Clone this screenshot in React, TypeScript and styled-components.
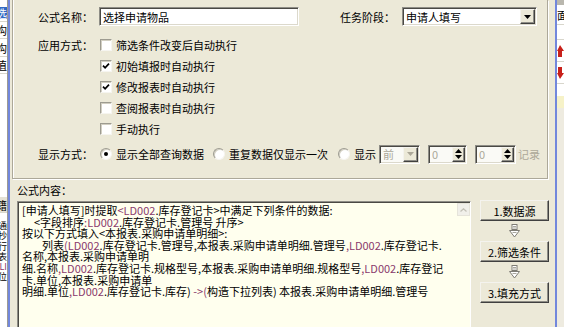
import React from 'react';
import styled, { createGlobalStyle } from 'styled-components';

const GlobalStyle = createGlobalStyle`
  html, body {
    margin: 0;
    padding: 0;
    overflow: hidden;
    background: #ECE9D8;
  }
  body {
    font-family: "Noto Sans CJK SC", "Liberation Sans", sans-serif;
    font-size: 11px;
    color: #000;
  }
`;

const Screen = styled.div`
  display: flex;
  width: 564px;
  height: 327px;
  overflow: hidden;
`;

/* windows lying behind the dialog, only a sliver of each is visible */
const BackLeft = styled.div`
  flex: none;
  width: 8px;
  box-sizing: border-box;
  border-right: 1px solid #9C9A92;
  background: #fff;
  display: flex;
  flex-direction: column;
  overflow: hidden;
`;

const BackRight = styled.div`
  flex: none;
  width: 7px;
  display: flex;
  flex-direction: column;
  overflow: hidden;
  background: #EEEBE0;
`;

const GridCell = styled.div<{ $h: number; $align?: 'start' | 'end'; $head?: boolean }>`
  flex: none;
  height: ${({ $h }) => $h}px;
  box-sizing: border-box;
  border-bottom: 1px solid #D8D6CC;
  background: ${({ $head }) => ($head ? '#E4E1D4' : '#fff')};
  display: flex;
  align-items: center;
  justify-content: ${({ $align }) => ($align === 'start' ? 'flex-start' : 'flex-end')};
  white-space: nowrap;
  line-height: 12px;
`;

const Picked = styled.span`
  background: #316AC5;
  color: #fff;
  padding: 0 0 0 2px;
`;

const Blank = styled.div<{ $h: number; $bg?: string }>`
  flex: none;
  height: ${({ $h }) => $h}px;
  background: ${({ $bg }) => $bg || '#fff'};
`;

const CutLines = styled.div`
  flex: none;
  display: flex;
  flex-direction: column;
  align-items: flex-end;
  padding-top: 8px;
  font-size: 9px;
  line-height: 10.3px;
  white-space: nowrap;
`;

const Dialog = styled.div`
  flex: none;
  width: 549px;
  height: 327px;
  box-sizing: border-box;
  border-left: 2px solid #7287DC;
  border-right: 2px solid #7287DC;
  background: #ECE9D8;
  display: flex;
  flex-direction: column;
`;

const GroupBox = styled.div`
  flex: none;
  height: 179px;
  margin: 0 7px 0 2px;
  box-sizing: border-box;
  border: 1px solid #ACA899;
  border-top: none;
  box-shadow: 1px 1px 0 #fff, inset 1px 0 0 #fff;
  padding: 7px 0 0 25px;
  display: flex;
  flex-direction: column;
`;

const FieldRow = styled.div<{ $mt?: number; $h: number }>`
  display: flex;
  align-items: center;
  height: ${({ $h }) => $h}px;
  margin-top: ${({ $mt }) => $mt || 0}px;
`;

const Label = styled.div<{ $w?: number; $ml?: number }>`
  flex: none;
  width: ${({ $w }) => ($w ? `${$w}px` : 'auto')};
  margin-left: ${({ $ml }) => $ml || 0}px;
  white-space: nowrap;
`;

const Sunken = styled.div<{ $w: number; $h?: number; $off?: boolean; $ml?: number }>`
  flex: none;
  position: relative;
  width: ${({ $w }) => $w}px;
  height: ${({ $h }) => $h || 19}px;
  margin-left: ${({ $ml }) => $ml || 0}px;
  box-sizing: border-box;
  border: 1px solid;
  border-color: #8E8D86 #fff #fff #8E8D86;
  box-shadow: inset 1px 1px 0 #4A4944, inset -1px -1px 0 #DCD9CC;
  background: ${({ $off }) => ($off ? '#FAFAF6' : '#fff')};
  color: ${({ $off }) => ($off ? '#ACA899' : '#000')};
  display: flex;
  align-items: center;
  padding-left: 3px;
  white-space: nowrap;
`;

const FieldText = styled.span`
  flex: 1;
`;

const Raised = styled.div<{ $w: number }>`
  flex: none;
  width: ${({ $w }) => $w}px;
  align-self: stretch;
  margin: 1px 1px 1px 0;
  box-sizing: border-box;
  border: 1px solid;
  border-color: #F4F3EE #404040 #404040 #F4F3EE;
  box-shadow: inset -1px -1px 0 #8E8D86;
  background: #ECE9D8;
  display: flex;
  flex-direction: column;
  align-items: center;
  justify-content: center;
  gap: 2px;
`;

const CheckList = styled.div`
  display: flex;
  flex-direction: column;
  margin-top: 8px;
`;

const OptionRow = styled.div<{ $h: number; $mt?: number }>`
  display: flex;
  align-items: center;
  height: ${({ $h }) => $h}px;
  margin-top: ${({ $mt }) => $mt || 0}px;
  white-space: nowrap;
`;

const Tick = styled.div<{ $round?: boolean; $ml?: number }>`
  flex: none;
  width: 12px;
  height: 12px;
  margin-left: ${({ $ml }) => ($ml === undefined ? 1 : $ml)}px;
  margin-right: 4px;
  box-sizing: border-box;
  border: 1px solid;
  border-color: #9D9B90 #F6F5F0 #F6F5F0 #9D9B90;
  border-radius: ${({ $round }) => ($round ? '50%' : '0')};
  box-shadow: inset 1px 1px 0 #D2CFC2;
  background: #fff;
  display: flex;
  align-items: center;
  justify-content: center;
`;

const Dot = styled.div`
  width: 4px;
  height: 4px;
  border-radius: 50%;
  background: #000;
`;

const Muted = styled.span<{ $ml?: number }>`
  color: #ACA899;
  margin-left: ${({ $ml }) => $ml || 0}px;
`;

const Section = styled.div`
  flex: 1;
  display: flex;
  flex-direction: column;
  padding: 4px 6px 0 7px;
`;

const SectionLabel = styled.div`
  height: 14px;
  line-height: 14px;
`;

const ContentRow = styled.div`
  display: flex;
  align-items: flex-start;
  margin-top: 4px;
`;

const Memo = styled.div`
  flex: none;
  width: 454px;
  height: 140px;
  box-sizing: border-box;
  border: 1px solid;
  border-color: #8E8D86 #fff #fff #8E8D86;
  box-shadow: inset 1px 1px 0 #4A4944;
  background: #FFFFEE;
  display: flex;
`;

const MemoText = styled.div`
  flex: 1;
  padding: 3px 0 0 4px;
  line-height: 11.6px;
  white-space: pre;
  overflow: hidden;
`;

const MemoLine = styled.div<{ $indent?: number }>`
  padding-left: ${({ $indent }) => $indent || 0}px;
`;

const Hl = styled.span`
  color: #8A3A6C;
`;

const ScrollTrack = styled.div`
  flex: none;
  width: 13px;
  padding-top: 1px;
`;

const ScrollBtn = styled.div`
  height: 13px;
  box-sizing: border-box;
  border: 1px solid #E6E4DA;
  background: #F1F0EA;
  display: flex;
  align-items: center;
  justify-content: center;
`;

const Steps = styled.div`
  flex: none;
  width: 69px;
  margin: -1px 0 0 9px;
  display: flex;
  flex-direction: column;
`;

const StepButton = styled.div`
  height: 21px;
  box-sizing: border-box;
  border: 1px solid;
  border-color: #F4F3EE #404040 #404040 #F4F3EE;
  box-shadow: inset -1px -1px 0 #8E8D86;
  display: flex;
  align-items: center;
  justify-content: center;
  white-space: nowrap;
`;

const StepLink = styled.div`
  height: 20px;
  display: flex;
  align-items: center;
  justify-content: center;
`;

const DropArrow = ({ off }: { off?: boolean }) => (
  <svg width="7" height="4" viewBox="0 0 7 4">
    <path d="M0 0H7L3.5 4Z" fill={off ? '#ACA899' : '#000'} />
  </svg>
);

const SpinArrows = () => (
  <>
    <svg width="7" height="4" viewBox="0 0 7 4">
      <path d="M0 4H7L3.5 0Z" fill="#000" />
    </svg>
    <svg width="7" height="4" viewBox="0 0 7 4">
      <path d="M0 0H7L3.5 4Z" fill="#000" />
    </svg>
  </>
);

const CheckMark = () => (
  <svg width="8" height="8" viewBox="0 0 8 8">
    <path d="M1 3.6L3.1 5.8L7 1.6" fill="none" stroke="#000" strokeWidth="1.7" />
  </svg>
);

const FlowArrow = () => (
  <svg width="11" height="14" viewBox="0 0 11 14">
    <rect x="3" y="0.5" width="5" height="5" fill="#fff" stroke="#7E7C74" />
    <path d="M4 2.5H7M4 4H7" stroke="#A9A79E" />
    <path d="M0.5 6.5H10.5L5.5 13Z" fill="#fff" stroke="#7E7C74" strokeLinejoin="round" />
    <path d="M3.5 8.5H7.5" stroke="#A9A79E" />
  </svg>
);

const RedMark = ({ down }: { down?: boolean }) => (
  <svg width="7" height="12" viewBox="0 0 7 12">
    <path d={down ? 'M0 6H7L3 12Z M1 0H5V6H1Z' : 'M0 6H7L3 0Z M1 6H5V12H1Z'} fill="#C8201A" />
  </svg>
);

const checks: { text: string; on: boolean }[] = [
  { text: '筛选条件改变后自动执行', on: false },
  { text: '初始填报时自动执行', on: true },
  { text: '修改报表时自动执行', on: true },
  { text: '查阅报表时自动执行', on: false },
  { text: '手动执行', on: false },
];

const steps = ['1.数据源', '2.筛选条件', '3.填充方式'];

const App = () => {
  return (
    <Screen>
      <GlobalStyle />
      <BackLeft>
        <Blank $h={4} />
        <GridCell $h={18}><Picked>选</Picked></GridCell>
        <GridCell $h={17}>构</GridCell>
        <GridCell $h={18}>构</GridCell>
        <GridCell $h={17}>值</GridCell>
        <Blank $h={123} />
        <GridCell $h={16} $head>籍</GridCell>
        <CutLines>
          <span>通</span>
          <span>抄</span>
          <span>行</span>
          <span>表</span>
          <Hl>LI</Hl>
          <span>位</span>
        </CutLines>
      </BackLeft>

      <Dialog>
        <GroupBox>
          <FieldRow $h={19}>
            <Label $w={61}>公式名称：</Label>
            <Sunken $w={200}>
              <FieldText>选择申请物品</FieldText>
            </Sunken>
            <Label $w={62} $ml={41}>任务阶段：</Label>
            <Sunken $w={135}>
              <FieldText>申请人填写</FieldText>
              <Raised $w={15}><DropArrow /></Raised>
            </Sunken>
          </FieldRow>

          <CheckList>
            {checks.map((c, i) => (
              <OptionRow key={c.text} $h={21}>
                <Label $w={61}>{i === 0 ? '应用方式：' : ''}</Label>
                <Tick>{c.on && <CheckMark />}</Tick>
                {c.text}
              </OptionRow>
            ))}
          </CheckList>

          <OptionRow $h={20} $mt={5}>
            <Label $w={61}>显示方式：</Label>
            <Tick $round><Dot /></Tick>
            显示全部查询数据
            <Tick $round $ml={9} />
            重复数据仅显示一次
            <Tick $round $ml={10} />
            显示
            <Sunken $w={41} $off $ml={3}>
              <FieldText>前</FieldText>
              <Raised $w={15}><DropArrow off /></Raised>
            </Sunken>
            <Sunken $w={39} $off $ml={8}>
              <FieldText>0</FieldText>
              <Raised $w={13}><SpinArrows /></Raised>
            </Sunken>
            <Sunken $w={41} $off $ml={8}>
              <FieldText>0</FieldText>
              <Raised $w={13}><SpinArrows /></Raised>
            </Sunken>
            <Muted $ml={2}>记录</Muted>
          </OptionRow>
        </GroupBox>

        <Section>
          <SectionLabel>公式内容：</SectionLabel>
          <ContentRow>
            <Memo>
              <MemoText>
                <MemoLine>[申请人填写]时提取<Hl>&lt;LD002</Hl>.库存登记卡&gt;中满足下列条件的数据:</MemoLine>
                <MemoLine $indent={12}>&lt;字段排序<Hl>:LD002</Hl>.库存登记卡.管理号 升序&gt;</MemoLine>
                <MemoLine>按以下方式填入&lt;本报表.采购申请单明细&gt;:</MemoLine>
                <MemoLine $indent={20}>列表<Hl>(LD002</Hl>.库存登记卡.管理号,本报表.采购申请单明细.管理号<Hl>,LD002</Hl>.库存登记卡.</MemoLine>
                <MemoLine>名称,本报表.采购申请单明</MemoLine>
                <MemoLine>细.名称<Hl>,LD002</Hl>.库存登记卡.规格型号,本报表.采购申请单明细.规格型号<Hl>,LD002</Hl>.库存登记</MemoLine>
                <MemoLine>卡.单位,本报表.采购申请单</MemoLine>
                <MemoLine>明细.单位<Hl>,LD002</Hl>.库存登记卡.库存) <Hl>-&gt;(</Hl>构造下拉列表) 本报表.采购申请单明细.管理号</MemoLine>
              </MemoText>
              <ScrollTrack>
                <ScrollBtn>
                  <svg width="7" height="4" viewBox="0 0 7 4">
                    <path d="M0.5 3.5L3.5 0.8L6.5 3.5" fill="none" stroke="#C4C2B8" strokeWidth="1.3" />
                  </svg>
                </ScrollBtn>
              </ScrollTrack>
            </Memo>

            <Steps>
              {steps.map((s, i) => (
                <React.Fragment key={s}>
                  {i > 0 && <StepLink><FlowArrow /></StepLink>}
                  <StepButton>{s}</StepButton>
                </React.Fragment>
              ))}
            </Steps>
          </ContentRow>
        </Section>
      </Dialog>

      <BackRight>
        <Blank $h={5} $bg="#B9B7AE" />
        <GridCell $h={20} $align="start">面</GridCell>
        <GridCell $h={15} $align="start" />
        <GridCell $h={22} $align="start"><RedMark /></GridCell>
        <GridCell $h={22} $align="start"><RedMark down /></GridCell>
        <Blank $h={12} $bg="#fff" />
        <Blank $h={12} $bg="#F6F2C8" />
      </BackRight>
    </Screen>
  );
};

export default App;
